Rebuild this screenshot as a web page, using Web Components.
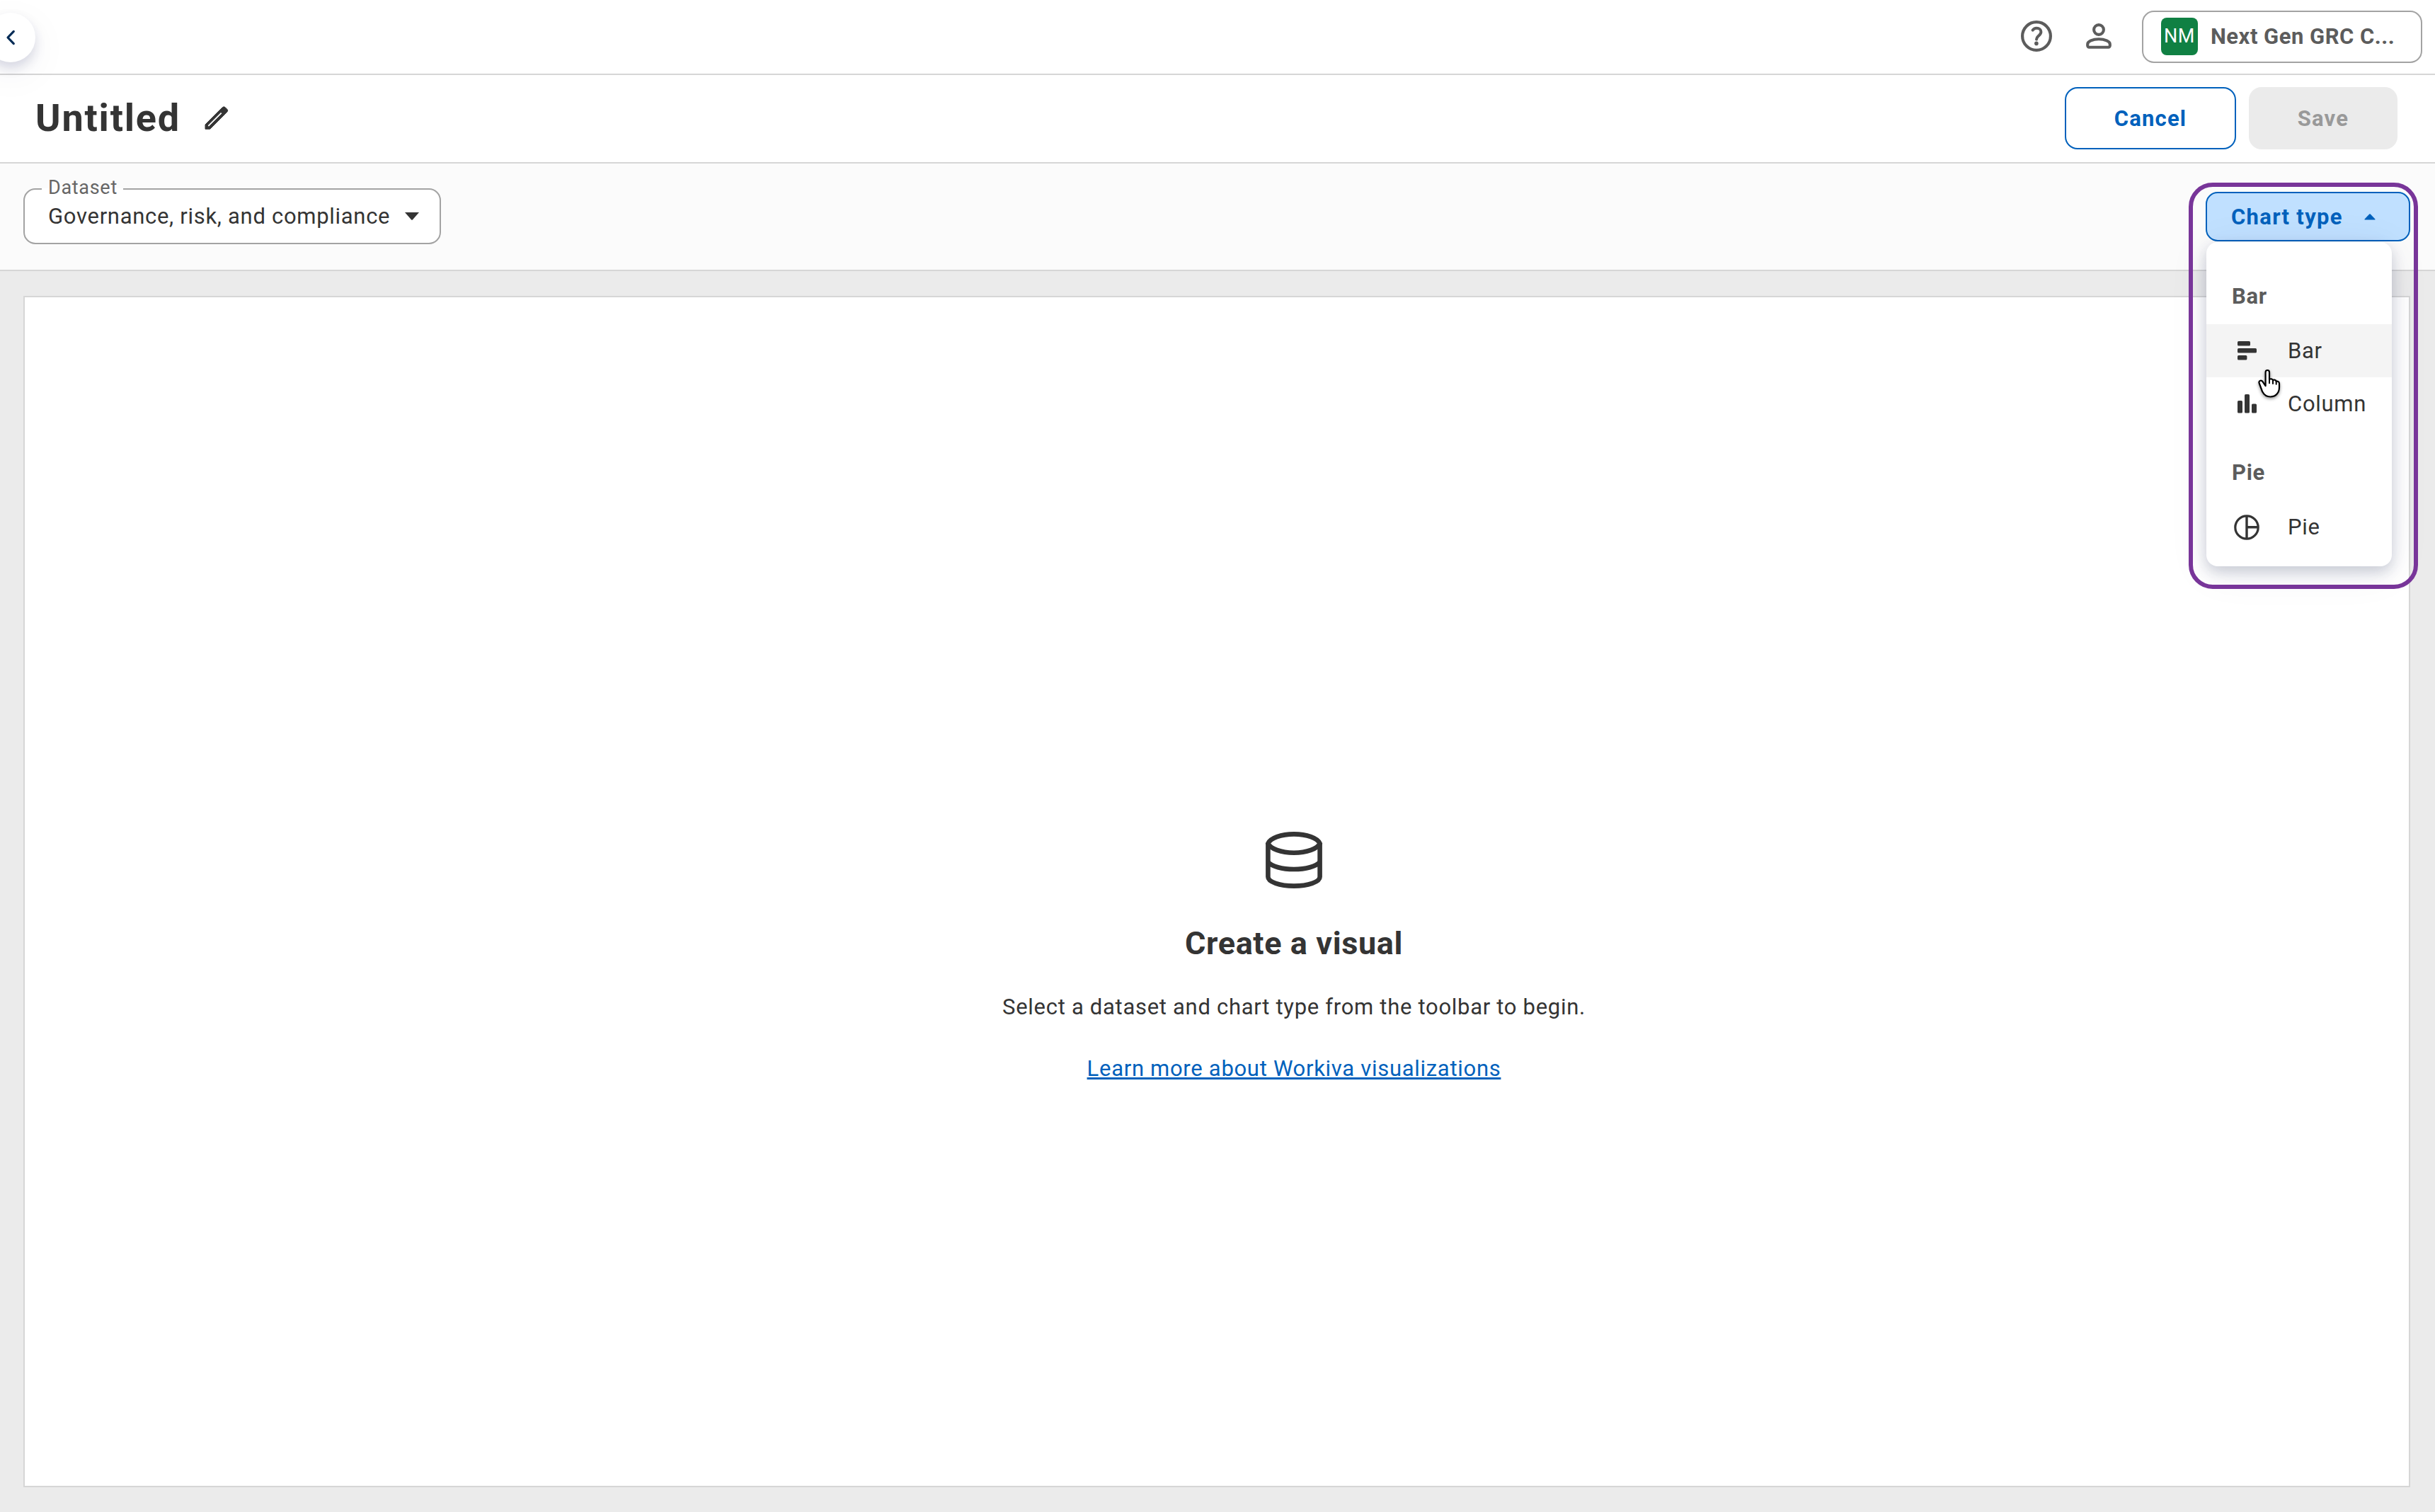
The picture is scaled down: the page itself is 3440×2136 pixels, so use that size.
<!DOCTYPE html>
<html lang="en">
<head>
<meta charset="utf-8">
<title>Untitled</title>
<style>
  html, body {
    margin: 0;
    height: 100%;
  }
  body {
    font-family: Roboto, "Liberation Sans", sans-serif;
    font-size: 31px;
    letter-spacing: 0.7px;
    color: #343434;
    background: #ebebeb;
    overflow: hidden;
  }
</style>
</head>
<body>
<app-shell>
  <app-header slot="header">
    <ui-icon name="help"></ui-icon>
    <ui-icon name="person"></ui-icon>
    <workspace-button initials="NM">Next Gen GRC C...</workspace-button>
  </app-header>
  <title-bar slot="title" heading="Untitled">
    <ui-button variant="outline">Cancel</ui-button>
    <ui-button variant="disabled">Save</ui-button>
  </title-bar>
  <tool-bar slot="toolbar">
    <ui-select label="Dataset">Governance, risk, and compliance</ui-select>
    <chart-menu label="Chart type">
      <menu-group label="Bar">
        <menu-item icon="bar" active>Bar</menu-item>
        <menu-item icon="column">Column</menu-item>
      </menu-group>
      <menu-group label="Pie">
        <menu-item icon="pie">Pie</menu-item>
      </menu-group>
    </chart-menu>
  </tool-bar>
  <empty-state heading="Create a visual">
    Select a dataset and chart type from the toolbar to begin.
    <span slot="link">Learn more about Workiva visualizations</span>
  </empty-state>
</app-shell>

<script>
const ICONS = {
    // [width, height, markup]
    help: [44, 44, `<circle cx="22" cy="22" r="19.9" fill="none" stroke="currentColor" stroke-width="4.2"/>
        <path d="M16.6 13.6c1.3-2 3.2-2.9 5.6-2.9 3.7 0 6.2 2.2 6.2 5.3 0 2.7-1.6 4-3.4 5.6-1.8 1.6-2.9 3-3 5" fill="none" stroke="currentColor" stroke-width="4" stroke-linecap="round"/>
        <circle cx="21.9" cy="32.4" r="2.8" fill="currentColor"/>`],
    person: [36, 36, `<circle cx="18" cy="9" r="6.9" fill="none" stroke="currentColor" stroke-width="4.1"/>
        <path d="M4.3 33.7h27.4a2.1 2.1 0 0 0 2.1-2.1v-2.2c0-3.6-7-7.2-15.8-7.2S2.2 25.8 2.2 29.4v2.2a2.1 2.1 0 0 0 2.1 2.1z" fill="none" stroke="currentColor" stroke-width="4.1"/>`],
    pencil: [32, 32, `<path d="M0 31.3V25L21.8 3.1 24.3.8a2.8 2.8 0 0 1 4 0l2.4 2.4a2.8 2.8 0 0 1 0 4L6.7 31.3zM3.5 27.8h1.8L23.9 9.3 22 7.5 3.5 26z" fill="currentColor" fill-rule="evenodd" stroke="currentColor" stroke-width="1" stroke-linejoin="round"/>`],
    chevron: [14, 22, `<path d="M11.3 2.4 3 11l8.3 8.6" fill="none" stroke="currentColor" stroke-width="3.2" stroke-linecap="round" stroke-linejoin="round"/>`],
    down: [20, 11, `<path d="M0 0h20L11 10.2q-1 1-2 0z" fill="currentColor"/>`],
    up: [16, 9, `<path d="M.8 8.6h14.4q.8-.3.2-1L8.8.5q-.8-.6-1.6 0L.6 7.6q-.6.7.2 1z" fill="currentColor"/>`],
    bar: [27, 27, `<rect width="18" height="6.6" rx="1.6" fill="currentColor"/>
        <rect y="10" width="27" height="6.6" rx="1.6" fill="currentColor"/>
        <rect y="20" width="13.4" height="6.6" rx="1.6" fill="currentColor"/>`],
    column: [27, 27, `<rect y="9" width="7" height="17.6" rx="1.6" fill="currentColor"/>
        <rect x="10" width="7" height="26.6" rx="1.6" fill="currentColor"/>
        <rect x="20" y="13.4" width="7" height="13.2" rx="1.6" fill="currentColor"/>`],
    pie: [36, 36, `<circle cx="18" cy="18" r="16.2" fill="none" stroke="currentColor" stroke-width="3.2"/>
        <path d="M18 2v32M18 17.8h16" stroke="currentColor" stroke-width="3.4"/>`],
    database: [80, 80, `<g fill="none" stroke="currentColor" stroke-width="6.6">
        <path d="M3.4 16.8v47c0 7 16.4 12.8 36.6 12.8s36.6-5.8 36.6-12.8v-47"/>
        <path d="M3.4 16.6C6.6 9 21.6 3.4 40 3.4S73.4 9 76.6 16.6C73.4 23.8 58.4 29.8 40 29.8S6.6 23.8 3.4 16.6z"/>
        <path d="M3.4 43c5.6 6 19.6 10 36.6 10s31-4 36.6-10"/></g>`],
    hand: [34, 44, `<path d="M10.6 5c0-4 5.4-4 5.4 0v10.2c1.5-1.6 4.5-1 5 1 1.7-1.2 4.3-.4 4.7 1.6 2-.6 4.3.5 4.3 3V26c0 7.500-4.500 13.500-12.500 13.500-5.500 0-9-2.500-11.500-7.500L1.700 20.500c-1.200-3.500 2.600-5.200 4.600-2.700l4.300 6.400z" fill="#fff" stroke="#000" stroke-width="2.2" stroke-linejoin="round"/>
        <path d="M16 14.5v5.8M21 16v5M25.7 17.5v4.3" stroke="#000" stroke-width="2" stroke-linecap="round"/>`]
};

class UiIcon extends HTMLElement {

    constructor() {
        super();
        this.attachShadow({ mode: 'open' });
    }

    connectedCallback() {
        const [width, height, markup] = ICONS[this.getAttribute('name')];
        this.shadowRoot.innerHTML = `
        <style>
          :host { display: block; flex: none; }
          svg { display: block; overflow: visible; }
        </style>
        <svg width="${width}" height="${height}" viewBox="0 0 ${width} ${height}">${markup}</svg>
      `;
    }
}

class AppShell extends HTMLElement {

    constructor() {
        super();
        this.attachShadow({ mode: 'open' });
    }

    connectedCallback() {
        this.shadowRoot.innerHTML = `
        <style>
          :host {
            display: grid;
            grid-template-rows: 106px 125px 152px 1fr;
            height: 100vh;
          }
          main {
            display: flex;
            padding: 35px 35px 35px 33px;
            background: #ebebeb;
          }
          section {
            display: flex;
            flex: 1;
            border: 2px solid #d6d6d6;
            background: #fff;
          }
        </style>
        <slot name="header"></slot>
        <slot name="title"></slot>
        <slot name="toolbar"></slot>
        <main><section><slot></slot></section></main>
      `;
    }
}

class AppHeader extends HTMLElement {

    constructor() {
        super();
        this.attachShadow({ mode: 'open' });
    }

    connectedCallback() {
        this.shadowRoot.innerHTML = `
        <style>
          :host {
            display: flex;
            position: relative;
            justify-content: flex-end;
            align-items: center;
            box-sizing: border-box;
            padding-right: 18px;
            border-bottom: 2px solid #d6d6d6;
            background: #fff;
            color: #5c5c5c;
          }
          ::slotted(ui-icon) { margin: 0 48px 2px 0; }
          ::slotted(ui-icon[name="person"]) { margin-right: 43px; }
          .collapse {
            position: absolute;
            left: -20px;
            top: 18px;
            display: flex;
            align-items: center;
            box-sizing: border-box;
            width: 70px;
            height: 70px;
            padding-left: 28px;
            border-radius: 50%;
            background: #fff;
            color: #002b55;
            z-index: 1;
            box-shadow: 0 8px 16px rgba(20, 30, 90, 0.15), 0 16px 56px rgba(20, 30, 90, 0.06);
          }
        </style>
        <div class="collapse"><ui-icon name="chevron"></ui-icon></div>
        <slot></slot>
      `;
    }
}

class WorkspaceButton extends HTMLElement {

    constructor() {
        super();
        this.attachShadow({ mode: 'open' });
    }

    connectedCallback() {
        this.shadowRoot.innerHTML = `
        <style>
          :host {
            display: flex;
            align-items: center;
            box-sizing: border-box;
            width: 396px;
            height: 74px;
            padding: 0 0 1px 25px;
            border: 2px solid #a3a3a3;
            border-radius: 17px;
            font-weight: 700;
            letter-spacing: 0.5px;
            white-space: nowrap;
          }
          .badge {
            width: 52px;
            margin-right: 18px;
            border-radius: 8px;
            background: #108043;
            color: #fff;
            font-size: 27px;
            font-weight: 400;
            line-height: 53px;
            text-align: center;
          }
        </style>
        <span class="badge">${this.getAttribute('initials')}</span>
        <slot></slot>
      `;
    }
}

class TitleBar extends HTMLElement {

    constructor() {
        super();
        this.attachShadow({ mode: 'open' });
    }

    connectedCallback() {
        this.shadowRoot.innerHTML = `
        <style>
          :host {
            display: flex;
            align-items: center;
            box-sizing: border-box;
            padding: 0 53px 1px 50px;
            border-bottom: 2px solid #d6d6d6;
            background: #fff;
          }
          h1 {
            margin: 0 35px 0 0;
            font-size: 54px;
            line-height: 64px;
            letter-spacing: 1.8px;
          }
          .actions {
            display: flex;
            gap: 18px;
            margin-left: auto;
          }
        </style>
        <h1>${this.getAttribute('heading')}</h1>
        <ui-icon name="pencil"></ui-icon>
        <div class="actions"><slot></slot></div>
      `;
    }
}

class UiButton extends HTMLElement {

    #variants = {
        outline: 'width: 242px; border: 2px solid #0061bc; background: #fff; color: #0061bc;',
        disabled: 'width: 210px; background: #ebebeb; color: #999;'
    };

    constructor() {
        super();
        this.attachShadow({ mode: 'open' });
    }

    connectedCallback() {
        this.shadowRoot.innerHTML = `
        <style>
          :host {
            display: flex;
            justify-content: center;
            align-items: center;
            box-sizing: border-box;
            height: 88px;
            border-radius: 18px;
            font-weight: 700;
            letter-spacing: 1.2px;
            ${this.#variants[this.getAttribute('variant')]}
          }
        </style>
        <slot></slot>
      `;
    }
}

class ToolBar extends HTMLElement {

    constructor() {
        super();
        this.attachShadow({ mode: 'open' });
    }

    connectedCallback() {
        this.shadowRoot.innerHTML = `
        <style>
          :host {
            display: flex;
            justify-content: space-between;
            align-items: center;
            box-sizing: border-box;
            padding: 0 35px 0 33px;
            border-bottom: 2px solid #d6d6d6;
            background: #fbfbfb;
          }
        </style>
        <slot></slot>
      `;
    }
}

class UiSelect extends HTMLElement {

    constructor() {
        super();
        this.attachShadow({ mode: 'open' });
    }

    connectedCallback() {
        this.shadowRoot.innerHTML = `
        <style>
          :host {
            display: flex;
            position: relative;
            align-items: center;
            justify-content: space-between;
            box-sizing: border-box;
            width: 590px;
            height: 79px;
            margin-bottom: 1px;
            padding: 0 29px 0 33px;
            border: 2px solid #a3a3a3;
            border-radius: 17px;
            background: #fff;
            white-space: nowrap;
          }
          label {
            position: absolute;
            left: 24px;
            top: -18px;
            box-sizing: border-box;
            width: 115px;
            padding-left: 9px;
            background: linear-gradient(#fbfbfb 16px, #fff 16px);
            color: #666;
            font-size: 27px;
            line-height: 31px;
          }
        </style>
        <label>${this.getAttribute('label')}</label>
        <slot></slot>
        <ui-icon name="down"></ui-icon>
      `;
    }
}

class ChartMenu extends HTMLElement {

    constructor() {
        super();
        this.attachShadow({ mode: 'open' });
    }

    connectedCallback() {
        this.shadowRoot.innerHTML = `
        <style>
          :host {
            display: block;
            position: relative;
            z-index: 2;
          }
          .trigger {
            display: flex;
            align-items: center;
            justify-content: space-between;
            box-sizing: border-box;
            width: 289px;
            height: 70px;
            padding: 0 47px 0 34px;
            border: 2px solid #0061bc;
            border-radius: 17px;
            background: #c0e0ff;
            color: #0061bc;
            font-weight: 700;
            letter-spacing: 1.3px;
          }
          .menu {
            position: absolute;
            left: 1px;
            top: 71px;
            box-sizing: border-box;
            width: 262px;
            height: 458px;
            padding-top: 32px;
            border-radius: 16px;
            background: #fff;
            box-shadow: 0 8px 20px rgba(15, 30, 70, 0.2), 0 8px 60px rgba(15, 30, 90, 0.07);
          }
          /* callout ring around the open menu */
          .callout {
            position: absolute;
            left: -24px;
            top: -13px;
            box-sizing: border-box;
            width: 324px;
            height: 574px;
            border: 6px solid #783599;
            border-radius: 34px;
          }
          .cursor {
            position: absolute;
            left: 74px;
            top: 250px;
            filter: drop-shadow(0 2px 2px rgba(0, 0, 0, 0.4));
          }
        </style>
        <div class="trigger">${this.getAttribute('label')}<ui-icon name="up"></ui-icon></div>
        <div class="menu"><slot></slot></div>
        <div class="callout"></div>
        <ui-icon class="cursor" name="hand"></ui-icon>
      `;
    }
}

class MenuGroup extends HTMLElement {

    constructor() {
        super();
        this.attachShadow({ mode: 'open' });
    }

    connectedCallback() {
        this.shadowRoot.innerHTML = `
        <style>
          :host {
            display: block;
            margin-bottom: 15px;
          }
          h3 {
            margin: 0;
            padding: 13px 0 8px 36px;
            color: #5c5c5c;
            font-size: 31px;
            line-height: 63px;
          }
        </style>
        <h3>${this.getAttribute('label')}</h3>
        <slot></slot>
      `;
    }
}

class MenuItem extends HTMLElement {

    constructor() {
        super();
        this.attachShadow({ mode: 'open' });
    }

    connectedCallback() {
        this.shadowRoot.innerHTML = `
        <style>
          :host {
            display: grid;
            grid-template-columns: 36px 1fr;
            column-gap: 40px;
            align-items: center;
            height: 75px;
            padding-left: 39px;
            background: ${this.hasAttribute('active') ? '#f4f4f4' : 'transparent'};
          }
          ui-icon { justify-self: center; }
        </style>
        <ui-icon name="${this.getAttribute('icon')}"></ui-icon>
        <span><slot></slot></span>
      `;
    }
}

class EmptyState extends HTMLElement {

    constructor() {
        super();
        this.attachShadow({ mode: 'open' });
    }

    connectedCallback() {
        this.shadowRoot.innerHTML = `
        <style>
          :host {
            display: flex;
            flex: 1;
            flex-direction: column;
            align-items: center;
            padding: 755px 0 0 218px;
          }
          h2 {
            margin: 46px 0 0;
            font-size: 45px;
            line-height: 64px;
            letter-spacing: 0.6px;
          }
          p {
            margin: 34px 0 0;
            line-height: 48px;
          }
          a {
            margin-top: 39px;
            color: #0061bc;
            line-height: 48px;
            text-decoration: underline;
            text-decoration-thickness: 3px;
            text-underline-offset: 2px;
            text-decoration-skip-ink: none;
          }
        </style>
        <ui-icon name="database"></ui-icon>
        <h2>${this.getAttribute('heading')}</h2>
        <p><slot></slot></p>
        <a><slot name="link"></slot></a>
      `;
    }
}

customElements.define('ui-icon', UiIcon);
customElements.define('app-shell', AppShell);
customElements.define('app-header', AppHeader);
customElements.define('workspace-button', WorkspaceButton);
customElements.define('title-bar', TitleBar);
customElements.define('ui-button', UiButton);
customElements.define('tool-bar', ToolBar);
customElements.define('ui-select', UiSelect);
customElements.define('chart-menu', ChartMenu);
customElements.define('menu-group', MenuGroup);
customElements.define('menu-item', MenuItem);
customElements.define('empty-state', EmptyState);
</script>
</body>
</html>
